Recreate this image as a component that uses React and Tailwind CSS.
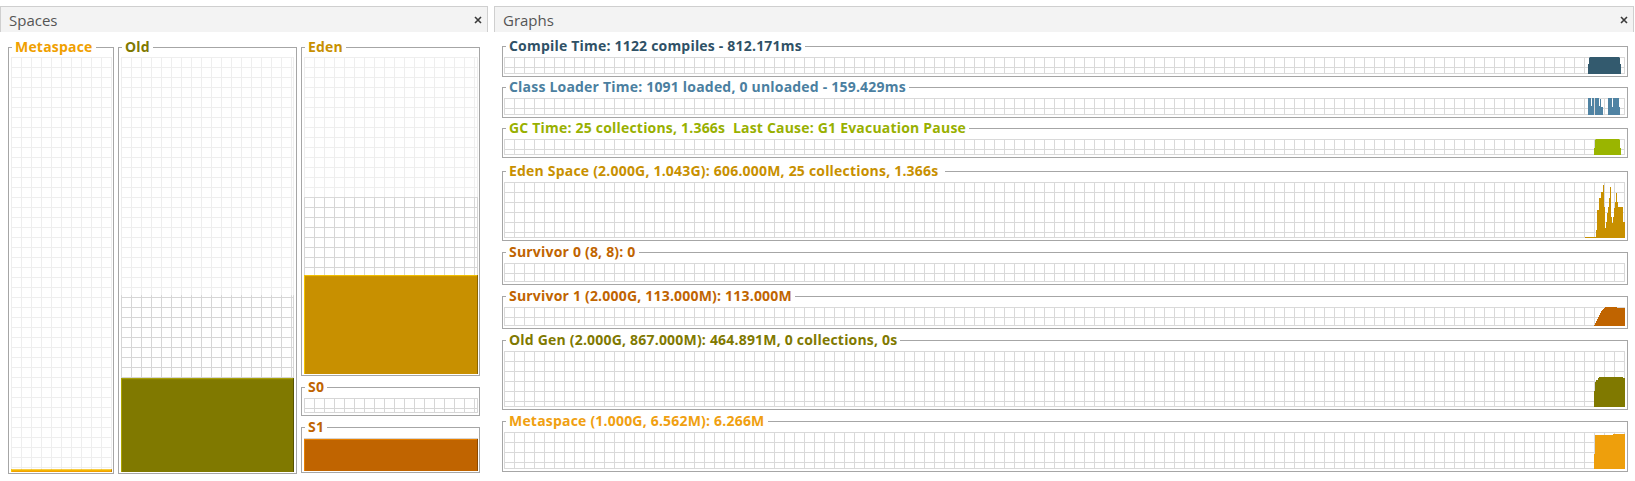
const pts = (list) => list.map((p) => p.join(',')).join(' ');

function CloseIcon() {
  return (
    <svg width="8" height="8" viewBox="0 0 8 8" className="block">
      <path d="M1 1L7 7M7 1L1 7" stroke="#3a3a3a" strokeWidth="1.6" />
    </svg>
  );
}

function PanelHeader({ title }) {
  return (
    <div className="flex h-[26px] shrink-0 items-center justify-between border-x border-t border-[#cfcfcf] bg-[#f3f3f3] pl-[8px] pr-[5px]">
      <span className="text-[15px] leading-[18px] text-[#555]">{title}</span>
      <CloseIcon />
    </div>
  );
}

// titled border box; the chart area gets a fixed pixel height
function Box({ label, tone, className = '', inner = '', chart = '', children }) {
  return (
    <fieldset className={`min-w-0 border border-[#a6a6a6] ${className}`}>
      <legend className={`ml-[3px] px-[3px] text-[14px] font-bold leading-[16px] tracking-[0.2px] ${tone}`}>{label}</legend>
      <div className={inner}>
        <div className={chart}>{children}</div>
      </div>
    </fieldset>
  );
}

function GridPattern({ id, color }) {
  return (
    <pattern id={id} width="10" height="10" patternUnits="userSpaceOnUse">
      <path d="M0 0.5H10M0.5 0V10" stroke={color} strokeWidth="1" fill="none" />
    </pattern>
  );
}

// committed / used are percentages of the max size
function SpaceChart({ id, committed, used, fill, hi, lo }) {
  const light = '#eeeeee';
  const dark = '#d6d6d6';
  return (
    <svg className="block h-full w-full">
      <defs>
        <GridPattern id={`${id}-l`} color={light} />
        <GridPattern id={`${id}-d`} color={dark} />
      </defs>
      <rect width="100%" height="100%" fill={`url(#${id}-l)`} />
      <rect x="100%" width="1" height="100%" transform="translate(-1 0)" fill={light} />
      <rect y="100%" width="100%" height="1" transform="translate(0 -1)" fill={light} />
      {committed > 0 ? (
        <>
          <rect y={`${100 - committed}%`} width="100%" height={`${committed}%`} fill={`url(#${id}-d)`} />
          <rect x="100%" y={`${100 - committed}%`} width="1" height={`${committed}%`} transform="translate(-1 0)" fill={dark} />
          <rect y="100%" width="100%" height="1" transform="translate(0 -1)" fill={dark} />
        </>
      ) : null}
      {used > 0 ? (
        <>
          <rect y={`${100 - used}%`} width="100%" height={`${used}%`} fill={fill} />
          <rect y={`${100 - used}%`} width="100%" height="1" fill={hi} />
          <rect y={`${100 - used}%`} width="1" height={`${used}%`} fill={hi} />
          <rect x="100%" y={`${100 - used}%`} width="1" height={`${used}%`} transform="translate(-1 0)" fill={lo} />
        </>
      ) : null}
    </svg>
  );
}

function GraphChart({ id, children }) {
  const line = '#d9d9d9';
  return (
    <svg className="block h-full w-full">
      <defs>
        <GridPattern id={id} color={line} />
      </defs>
      <rect width="100%" height="100%" fill={`url(#${id})`} />
      <rect x="100%" width="1" height="100%" transform="translate(-1 0)" fill={line} />
      <rect y="100%" width="100%" height="1" transform="translate(0 -1)" fill={line} />
      <svg x="100%" y="100%" overflow="visible">
        {children}
      </svg>
    </svg>
  );
}

const compileShape = [[-37, 0], [-37, -10], [-36, -10], [-36, -16], [-35, -17], [-6, -17], [-5, -16], [-5, -10], [-4, -10], [-4, 0]];
const classBars = [
  [-37, 3, 17], [-37, 6, 9], [-33, 2, 17], [-30, 4, 17], [-30, 5, 9],
  [-25, 1, 16], [-25, 3, 8], [-17, 4, 17], [-17, 5, 8], [-12, 6, 17], [-13, 8, 8],
];
const gcShape = [[-31, 0], [-31, -7], [-30, -7], [-30, -15], [-29, -16], [-6, -16], [-5, -15], [-5, -7], [-4, -7], [-4, 0]];
const edenShape = [
  [-40, 0], [-40, -1], [-29, -1], [-29, -8], [-28, -8], [-28, -28], [-26, -28], [-26, -40], [-24, -40], [-24, -46],
  [-22, -46], [-22, -53], [-21, -53], [-21, -31], [-20, -31], [-20, -10], [-19, -10], [-19, -16], [-18, -16], [-18, -25],
  [-17, -25], [-17, -31], [-16, -31], [-16, -40], [-15, -40], [-15, -51], [-14, -51], [-14, -21], [-13, -21], [-13, -15],
  [-12, -15], [-12, -21], [-11, -21], [-11, -30], [-10, -30], [-10, -36], [-9, -36], [-9, -45], [-8, -45], [-8, -36],
  [-7, -36], [-7, -31], [-2, -31], [-2, -16], [0, -16], [0, 0],
];
const s1Shape = [
  [-31, 0], [-31, -1], [-30, -1], [-30, -3], [-29, -3], [-29, -5], [-28, -5], [-28, -7], [-27, -7], [-27, -9],
  [-26, -9], [-26, -11], [-25, -11], [-25, -13], [-24, -13], [-24, -15], [-23, -15], [-23, -16], [-22, -16], [-22, -17],
  [-21, -17], [-21, -18], [-20, -18], [-20, -19], [-8, -19], [-8, -18], [0, -18], [0, 0],
];
const oldShape = [[-31, 0], [-31, -16], [-30, -16], [-30, -25], [-29, -25], [-29, -27], [-27, -27], [-27, -29], [-26, -29], [-26, -30], [-2, -30], [-2, -29], [0, -29], [0, 0]];
const metaShape = [[-31, 0], [-31, -15], [-30, -15], [-30, -34], [-12, -34], [-12, -35], [0, -35], [0, 0]];

function SpacesPanel() {
  return (
    <section className="flex w-[488px] shrink-0 flex-col">
      <PanelHeader title="Spaces" />
      <div className="flex items-start gap-[4px] px-[8px] pt-[7px]">
        <Box label="Metaspace" tone="text-[#f0a000]" className="w-[106px]" inner="pl-[2px] pr-[1px] pt-[2px] pb-[1px]" chart="h-[415px]">
          <SpaceChart id="sp-meta" committed={0.7} used={0.6} fill="#f0a000" hi="#f8c800" lo="#c08000" />
        </Box>
        <Box label="Old" tone="text-[#7f7900]" className="w-[179px]" inner="px-[2px] pt-[2px] pb-[1px]" chart="h-[415px]">
          <SpaceChart id="sp-old" committed={42.6} used={22.6} fill="#807900" hi="#aca400" lo="#575200" />
        </Box>
        <div className="flex w-[179px] flex-col gap-[3px]">
          <Box label="Eden" tone="text-[#c89000]" inner="pl-[2px] pr-[1px] pt-[2px] pb-[1px]" chart="h-[317px]">
            <SpaceChart id="sp-eden" committed={55.8} used={31.2} fill="#c89000" hi="#f4c400" lo="#8a6400" />
          </Box>
          <Box label="S0" tone="text-[#c06400]" inner="pl-[2px] pr-[1px] pt-[3px] pb-[2px]" chart="h-[15px]">
            <SpaceChart id="sp-s0" committed={100} used={0} fill="#c06400" hi="#e08000" lo="#8a4800" />
          </Box>
          <Box label="S1" tone="text-[#c06400]" inner="pl-[2px] pr-[1px] pt-[3px] pb-[1px]" chart="h-[33px]">
            <SpaceChart id="sp-s1" committed={100} used={97} fill="#c06400" hi="#e88000" lo="#8a4800" />
          </Box>
        </div>
      </div>
    </section>
  );
}

function GraphsPanel() {
  const inner = 'pl-[1px] pr-[2px] pt-[3px] pb-[2px]';
  return (
    <section className="flex w-[1140px] shrink-0 flex-col">
      <PanelHeader title="Graphs" />
      <div className="flex flex-col pl-[8px] pr-[6px] pt-[6px]">
        <Box label="Compile Time: 1122 compiles - 812.171ms" tone="text-[#2f5166]" inner={inner} chart="h-[17px]">
          <GraphChart id="g-compile">
            <polygon points={pts(compileShape)} fill="#335a6e" />
          </GraphChart>
        </Box>
        <Box label="Class Loader Time: 1091 loaded, 0 unloaded - 159.429ms" tone="text-[#4b7fa0]" className="mt-[2px]" inner={inner} chart="h-[17px]">
          <GraphChart id="g-class">
            {classBars.map(([x, w, h], i) => (
              <rect key={i} x={x} y={-h} width={w} height={h} fill="#5083a3" />
            ))}
          </GraphChart>
        </Box>
        <Box label="GC Time: 25 collections, 1.366s  Last Cause: G1 Evacuation Pause" tone="text-[#98b000] whitespace-pre" className="mt-[2px]" inner={inner} chart="h-[16px]">
          <GraphChart id="g-gc">
            <polygon points={pts(gcShape)} fill="#9ab500" />
          </GraphChart>
        </Box>
        <Box label="Eden Space (2.000G, 1.043G): 606.000M, 25 collections, 1.366s " tone="text-[#c89000] whitespace-pre" className="mt-[5px]" inner={inner} chart="h-[56px]">
          <GraphChart id="g-eden">
            <polygon points={pts(edenShape)} fill="#c89000" />
          </GraphChart>
        </Box>
        <Box label="Survivor 0 (8, 8): 0" tone="text-[#c06400]" className="mt-[3px]" inner={inner} chart="h-[19px]">
          <GraphChart id="g-s0" />
        </Box>
        <Box label="Survivor 1 (2.000G, 113.000M): 113.000M" tone="text-[#c06400]" className="mt-[3px]" inner={inner} chart="h-[19px]">
          <GraphChart id="g-s1">
            <polygon points={pts(s1Shape)} fill="#c06400" />
          </GraphChart>
        </Box>
        <Box label="Old Gen (2.000G, 867.000M): 464.891M, 0 collections, 0s" tone="text-[#7f7900]" className="mt-[3px]" inner={inner} chart="h-[56px]">
          <GraphChart id="g-old">
            <polygon points={pts(oldShape)} fill="#807900" />
          </GraphChart>
        </Box>
        <Box label="Metaspace (1.000G, 6.562M): 6.266M" tone="text-[#f0a010]" className="mt-[3px]" inner={inner} chart="h-[37px]">
          <GraphChart id="g-meta">
            <polygon points={pts(metaShape)} fill="#ee9f0c" />
          </GraphChart>
        </Box>
      </div>
    </section>
  );
}

export default function App() {
  return (
    <div className="flex h-[481px] w-[1635px] items-start gap-[6px] overflow-hidden bg-white pt-[6px] font-['Open_Sans','DejaVu_Sans',sans-serif]">
      <SpacesPanel />
      <GraphsPanel />
    </div>
  );
}
